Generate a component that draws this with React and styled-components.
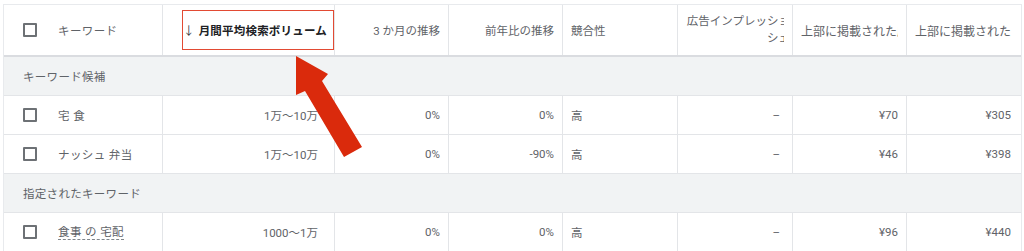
import styled, { createGlobalStyle } from "styled-components";

const GlobalStyle = createGlobalStyle`
  body {
    margin: 0;
    background: #ffffff;
    font-family: Roboto, "Noto Sans CJK JP", "Noto Sans", sans-serif;
    color: #5f6368;
  }
`;

const cols = "159px 172px 114px 114px 115px 115px 114px 112px";

const keywords = [
  { title: "キーワード候補" },
  { kw: "宅 食", vol: "1万〜10万", m3: "0%", yoy: "0%", comp: "高", imp: "–", low: "¥70", high: "¥305" },
  { kw: "ナッシュ 弁当", vol: "1万〜10万", m3: "0%", yoy: "-90%", comp: "高", imp: "–", low: "¥46", high: "¥398" },
  { title: "指定されたキーワード" },
  { kw: "食事 の 宅配", vol: "1000〜1万", m3: "0%", yoy: "0%", comp: "高", imp: "–", low: "¥96", high: "¥440", dotted: true },
];

export default function App() {
  return (
    <>
      <GlobalStyle />
      <Page>
        <Table>
          <HeaderRow>
            <Cell>
              <Check />
              <Label>キーワード</Label>
            </Cell>
            <Cell $align="right" $pad="0">
              <Highlight>
                <SortIcon>↓</SortIcon>月間平均検索ボリューム
              </Highlight>
            </Cell>
            <Cell $align="right">3 か月の推移</Cell>
            <Cell $align="right">前年比の推移</Cell>
            <Cell>競合性</Cell>
            <Cell $align="right">
              <Clip>
                <ClipText>広告インプレッショ<br />シェ</ClipText>
              </Clip>
            </Cell>
            <Cell><Cut>上部に掲載された広告</Cut></Cell>
            <Cell $last><Cut>上部に掲載された広告</Cut></Cell>
          </HeaderRow>
          {keywords.map((r, i) =>
            r.title ? (
              <GroupRow key={i}>{r.title}</GroupRow>
            ) : (
              <Row key={i}>
                <Cell>
                  <Check />
                  <Label $dotted={r.dotted}>{r.kw}</Label>
                </Cell>
                <Cell $align="right" $pad="16px">{r.vol}</Cell>
                <Cell $align="right">{r.m3}</Cell>
                <Cell $align="right">{r.yoy}</Cell>
                <Cell>{r.comp}</Cell>
                <Cell $align="right" $pad="12px">{r.imp}</Cell>
                <Cell $align="right">{r.low}</Cell>
                <Cell $align="right" $last>{r.high}</Cell>
              </Row>
            )
          )}
          <Arrow viewBox="0 0 120 120" width="120" height="120">
            <polygon
              points="12,6 44,24 38,31 78,97 60,107 21,41 12,45"
              fill="#da2a0c"
            />
          </Arrow>
        </Table>
      </Page>
    </>
  );
}

const Page = styled.div`
  padding: 4px 0 0 3px;
  width: 1024px;
  height: 251px;
  box-sizing: border-box;
  overflow: hidden;
`;

const Table = styled.div`
  position: relative;
  width: 1017px;
  border-top: 1px solid #e8eaed;
  border-left: 1px solid #e8eaed;
  border-right: 1px solid #e8eaed;
  font-size: 11.5px;
`;

const HeaderRow = styled.div`
  display: grid;
  grid-template-columns: ${cols};
  height: 50px;
  border-bottom: 2px solid #dadce0;
`;

const Row = styled.div`
  display: grid;
  grid-template-columns: ${cols};
  height: 38px;
  border-bottom: 1px solid #e3e5e8;
  color: #5f6368;
`;

const GroupRow = styled.div`
  display: flex;
  align-items: center;
  height: 38px;
  padding-left: 19px;
  background: #f1f3f4;
  border-bottom: 1px solid #e3e5e8;
  letter-spacing: 0.3px;
`;

const Cell = styled.div`
  display: flex;
  align-items: center;
  justify-content: ${(p) => (p.$align === "right" ? "flex-end" : "flex-start")};
  padding: 0 ${(p) => p.$pad || "8px"} 0 ${(p) => (p.$align === "right" ? "0" : "8px")};
  border-right: ${(p) => (p.$last ? "none" : "1px solid #e3e5e8")};
  overflow: hidden;
  white-space: nowrap;
`;

const Check = styled.span`
  width: 10px;
  height: 10px;
  margin-left: 11px;
  border: 2px solid #6d7175;
  border-radius: 1px;
  flex: none;
`;

const Label = styled.span`
  margin-left: 21px;
  letter-spacing: 0.4px;
  color: #5f6368;
  ${(p) => p.$dotted && "border-bottom: 1px dashed #80868b; line-height: 14px;"}
`;

const Highlight = styled.span`
  display: inline-flex;
  align-items: center;
  box-sizing: border-box;
  height: 40px;
  width: 152px;
  justify-content: flex-end;
  padding-right: 6px;
  border: 1.5px solid #e24a33;
  color: #202124;
  font-weight: 700;
  letter-spacing: 0.2px;
`;

const SortIcon = styled.span`
  font-weight: 400;
  margin-right: 4px;
  color: #3c4043;
`;

const Clip = styled.span`
  display: block;
  width: 100px;
  overflow: hidden;
`;

const ClipText = styled.span`
  display: block;
  width: 106px;
  text-align: right;
  white-space: nowrap;
  line-height: 17px;
`;

const Cut = styled.span`
  display: block;
  width: 99px;
  overflow: hidden;
  white-space: nowrap;
  font-size: 12px;
`;

const Arrow = styled.svg`
  position: absolute;
  left: 280px;
  top: 45px;
  pointer-events: none;
`;
